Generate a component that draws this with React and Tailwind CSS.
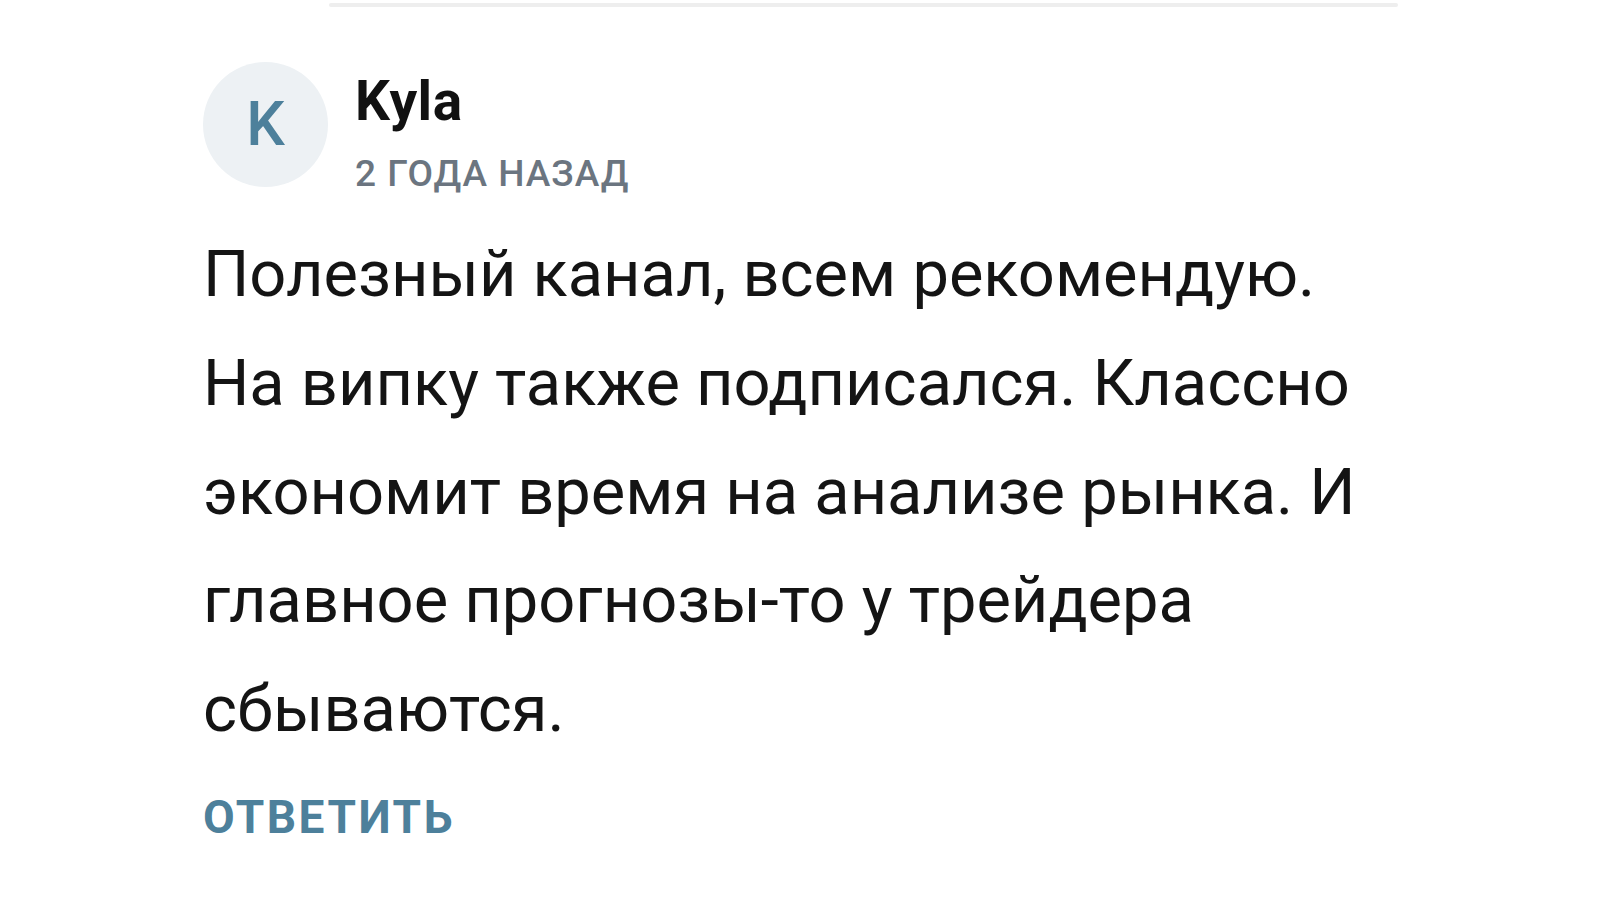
export default function App() {
  const lines = [
    "Полезный канал, всем рекомендую.",
    "На випку также подписался. Классно",
    "экономит время на анализе рынка. И",
    "главное прогнозы-то у трейдера",
    "сбываются.",
  ];
  return (
    <div className="w-[1600px] h-[900px] bg-white overflow-hidden" style={{ fontFamily: "Roboto, 'Noto Sans', sans-serif" }}>
      <div className="pt-[3px] pl-[329px]">
        <div className="w-[1069px] h-[4px] bg-[#eeeeee] rounded-full"></div>
      </div>
      <div className="pl-[203px] pt-[55px]">
        <div className="flex items-start">
          <div className="w-[125px] h-[125px] rounded-full bg-[#edf1f4] flex items-center justify-center shrink-0">
            <span className="text-[61px] leading-none font-medium text-[#4d809b]">K</span>
          </div>
          <div className="ml-[27px] pt-[12px] flex flex-col">
            <span className="text-[55px] leading-none font-bold text-[#111111] tracking-[0.5px]">Kyla</span>
            <span className="mt-[26px] text-[37px] leading-none font-medium text-[#6b7580] tracking-[1px]">2 ГОДА НАЗАД</span>
          </div>
        </div>
        <div className="mt-[28px] text-[65px] leading-[108.75px] text-[#141414]">
          {lines.map((l, i) => (
            <div key={i} className="whitespace-nowrap">{l}</div>
          ))}
        </div>
        <div className="mt-[30px] text-[46px] leading-none font-bold text-[#4d809b] tracking-[2.5px]">ОТВЕТИТЬ</div>
      </div>
    </div>
  );
}
